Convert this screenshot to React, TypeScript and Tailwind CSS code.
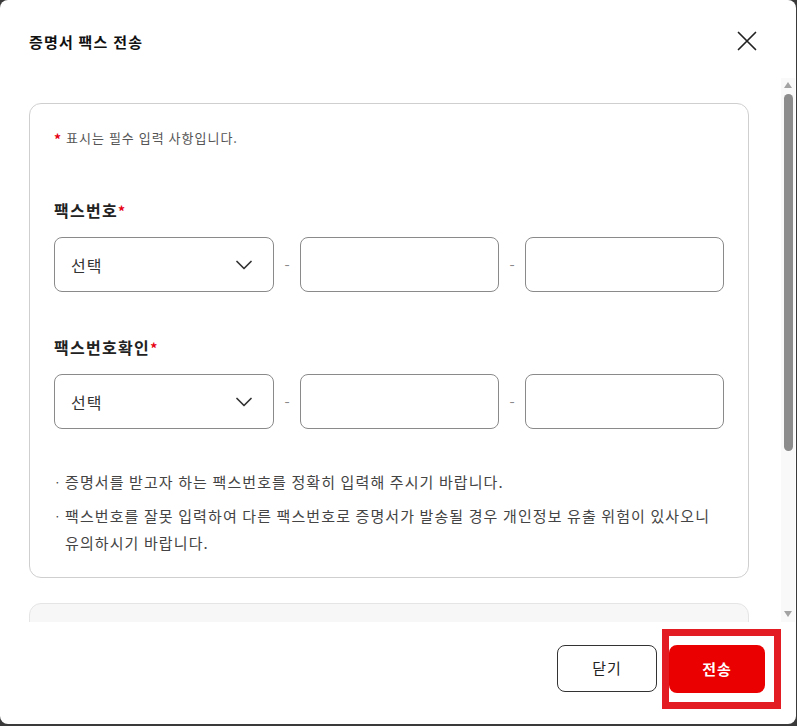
import React from "react";

const font = { fontFamily: '"Noto Sans CJK KR", "Noto Sans", sans-serif' };

function Chevron() {
  return (
    <svg width="16" height="10" viewBox="0 0 16 10" fill="none">
      <path d="M1 1.5 L8 8.5 L15 1.5" stroke="#333" strokeWidth="1.7" strokeLinecap="round" strokeLinejoin="round" />
    </svg>
  );
}

function PhoneRow() {
  return (
    <div className="flex items-center">
      <div className="w-[220px] h-[55px] border border-[#8a8a8a] rounded-[8px] flex items-center justify-between pl-[16px] pr-[21px] bg-white">
        <span className="text-[16px] text-[#333] tracking-[1px]">선택</span>
        <Chevron />
      </div>
      <div className="w-[26px] text-center text-[#8a8a8a] text-[15px]">-</div>
      <div className="w-[199px] h-[55px] border border-[#8a8a8a] rounded-[8px] bg-white" />
      <div className="w-[26px] text-center text-[#8a8a8a] text-[15px]">-</div>
      <div className="w-[199px] h-[55px] border border-[#8a8a8a] rounded-[8px] bg-white" />
    </div>
  );
}

export default function App() {
  return (
    <div className="w-[797px] h-[726px] bg-[#3a3a3a]" style={font}>
      <div className="relative w-[796px] h-[724px] bg-white rounded-[8px] flex flex-col overflow-hidden">
        {/* Header */}
        <div className="h-[78px] flex items-center justify-between pl-[29px] pr-[39px] pt-[4px] shrink-0">
          <h1 className="text-[15px] font-bold text-[#111] leading-none tracking-[1.2px]">증명서 팩스 전송</h1>
          <svg width="20" height="20" viewBox="0 0 20 20" fill="none">
            <path d="M1.5 1.5 L18.5 18.5 M18.5 1.5 L1.5 18.5" stroke="#222" strokeWidth="1.7" strokeLinecap="round" />
          </svg>
        </div>

        {/* Scroll area */}
        <div className="h-[544px] flex shrink-0">
          <div className="flex-1 overflow-hidden pl-[29px] pt-[25px]">
            <div className="w-[720px] border border-[#cfcfcf] rounded-[12px] px-[24px] pt-[24px] pb-[21px]">
              <p className="h-[20px] flex items-center text-[13px] text-[#555] tracking-[1px]">
                <span className="text-[#e60012] font-bold mr-[4px] text-[14px] mt-[3px]">*</span>
                표시는 필수 입력 사항입니다.
              </p>
              <div className="mt-[50px] h-[24px] flex items-center text-[16px] font-bold text-[#222] tracking-[1.3px]">
                팩스번호<span className="text-[#e60012] text-[14px] mt-[2px]">*</span>
              </div>
              <div className="mt-[15px]">
                <PhoneRow />
              </div>
              <div className="mt-[43px] h-[24px] flex items-center text-[16px] font-bold text-[#222] tracking-[1.3px]">
                팩스번호확인<span className="text-[#e60012] text-[14px] mt-[2px]">*</span>
              </div>
              <div className="mt-[15px]">
                <PhoneRow />
              </div>
              <ul className="mt-[39px] flex flex-col gap-[7px] text-[15px] text-[#444] leading-[27px] tracking-[1.1px]">
                <li className="flex">
                  <span className="w-[11px] shrink-0 text-[12px]">·</span>
                  <span>증명서를 받고자 하는 팩스번호를 정확히 입력해 주시기 바랍니다.</span>
                </li>
                <li className="flex">
                  <span className="w-[11px] shrink-0 text-[12px]">·</span>
                  <span>
                    팩스번호를 잘못 입력하여 다른 팩스번호로 증명서가 발송될 경우 개인정보 유출 위험이 있사오니
                    <br />
                    유의하시기 바랍니다.
                  </span>
                </li>
              </ul>
            </div>
            <div className="mt-[25px] w-[720px] h-[80px] border border-[#e5e5e5] bg-[#f7f7f7] rounded-[12px]" />
          </div>
          {/* Fake scrollbar */}
          <div className="w-[14px] mr-[1px] bg-[#f9f9f9] flex flex-col items-center pt-[4px] pb-[5px]">
            <svg width="8" height="6" viewBox="0 0 8 6"><path d="M4 0 L8 6 L0 6 Z" fill="#a3a3a3" /></svg>
            <div className="w-[9px] h-[357px] mt-[6px] bg-[#8c8c8c] rounded-full" />
            <div className="flex-1" />
            <svg width="8" height="6" viewBox="0 0 8 6"><path d="M0 0 L8 0 L4 6 Z" fill="#a3a3a3" /></svg>
          </div>
        </div>

        {/* Footer */}
        <div className="flex-1 flex justify-end items-start pt-[23px] pr-[31px] gap-[12px]">
          <button className="w-[100px] h-[47px] border border-[#333] rounded-[8px] text-[15px] text-[#222] bg-white tracking-[1px]">닫기</button>
          <button className="w-[96px] h-[48px] rounded-[8px] text-[15px] font-bold text-white bg-[#ea0000] tracking-[1px]">전송</button>
        </div>

        {/* Highlight overlay */}
        <div className="absolute left-[662px] top-[629px] w-[119px] h-[80px] border-[7px] border-[#e31b23] pointer-events-none" />
      </div>
    </div>
  );
}
